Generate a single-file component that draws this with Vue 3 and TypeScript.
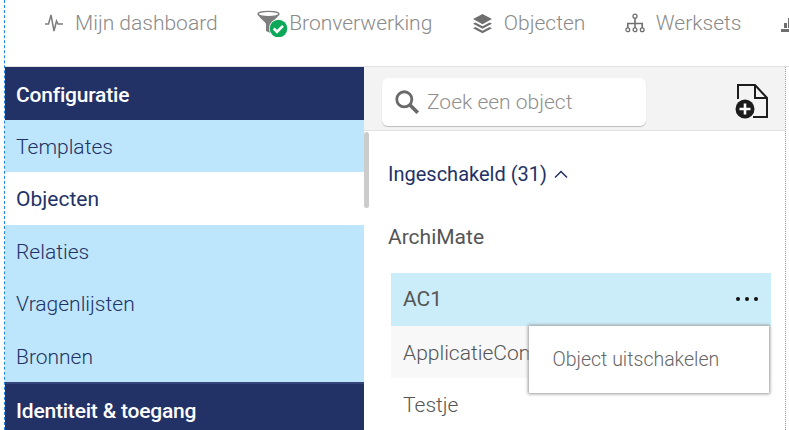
<script setup lang="ts">
const navItems = [
  { label: 'Mijn dashboard', icon: 'pulse' },
  { label: 'Bronverwerking', icon: 'funnel' },
  { label: 'Objecten', icon: 'layers' },
  { label: 'Werksets', icon: 'tree' },
  { label: '', icon: 'chart' },
]
const sideItems = [
  { label: 'Templates', active: false },
  { label: 'Objecten', active: true },
  { label: 'Relaties', active: false },
  { label: 'Vragenlijsten', active: false },
  { label: 'Bronnen', active: false },
]
</script>

<template>
  <div class="page">
    <div class="app">
      <nav class="topnav">
        <div v-for="n in navItems" :key="n.icon" class="nav-item" :class="'nav-' + n.icon">
          <svg v-if="n.icon === 'pulse'" class="nicon" width="20" height="20" viewBox="0 0 20 20" fill="none" stroke="#7d7d7d" stroke-width="1.5">
            <path d="M1 11 H4.5 L7 2 L10 18 L12.5 8 L14 11 H19" />
          </svg>
          <svg v-else-if="n.icon === 'funnel'" class="nfunnel" width="32" height="28" viewBox="0 0 32 28">
            <ellipse cx="11.5" cy="5" rx="10.5" ry="2.6" fill="#fff" stroke="#7d7d7d" stroke-width="1.4" />
            <path d="M1.5 6 C3 10 8 12 9 15 V22 L13.5 24 V15 C14.5 12 20 10 21.5 6 C18 8.5 5 8.5 1.5 6Z" fill="#7d7d7d" />
            <circle cx="21.5" cy="19.5" r="9.5" fill="#fff" />
            <circle cx="21.5" cy="19.5" r="8.8" fill="#0aa858" />
            <path d="M16.7 19.5 L20 22.8 L26 16.9" fill="none" stroke="#fff" stroke-width="2.6" />
          </svg>
          <svg v-else-if="n.icon === 'layers'" class="nicon" width="21" height="21" viewBox="0 0 20 20" fill="#6f6f6f">
            <path d="M10 1 L19 5.8 L10 10.6 L1 5.8Z" />
            <path d="M3.2 9 L10 12.6 L16.8 9 L19 10.2 L10 15 L1 10.2Z" />
            <path d="M3.2 13.4 L10 17 L16.8 13.4 L19 14.6 L10 19.2 L1 14.6Z" />
          </svg>
          <svg v-else-if="n.icon === 'tree'" class="nicon" width="20" height="20" viewBox="0 0 20 20" fill="none" stroke="#6f6f6f" stroke-width="1.3">
            <circle cx="10" cy="3.2" r="2" />
            <circle cx="2.8" cy="16.8" r="1.9" />
            <circle cx="10" cy="16.8" r="1.9" />
            <circle cx="17.2" cy="16.8" r="1.9" />
            <path d="M10 5.2 V15 M2.8 15 V10.5 H17.2 V15" stroke-width="1.6" />
          </svg>
          <svg v-else class="nicon" width="20" height="20" viewBox="0 0 20 20" fill="#6f6f6f">
            <path d="M0 16 H20 V19 H0Z M3 10 H6 V15 H3Z M7 5 H10 V15 H7Z" />
          </svg>
          <span v-if="n.label">{{ n.label }}</span>
        </div>
      </nav>

      <div class="body">
        <aside class="side">
          <div class="side-head">Configuratie</div>
          <div v-for="s in sideItems" :key="s.label" class="side-item" :class="{ active: s.active }">{{ s.label }}</div>
          <div class="side-head second">Identiteit &amp; toegang</div>
        </aside>

        <main class="main">
          <div class="scrollbar"></div>
          <div class="toolbar">
            <div class="search">
              <svg width="28" height="28" viewBox="0 0 26 26" fill="none" stroke="#6a6a6a">
                <circle cx="10.5" cy="10.5" r="7" stroke-width="2.6" />
                <path d="M15.8 15.8 L23 23" stroke-width="3.4" />
              </svg>
              <span>Zoek een object</span>
            </div>
            <svg class="newfile" width="36" height="36" viewBox="0 0 36 36" fill="none">
              <path d="M4 16 V2 H21 L33 15 V34 H19" stroke="#1c1c1c" stroke-width="2" />
              <path d="M21 2 V15 H33" stroke="#1c1c1c" stroke-width="2" />
              <circle cx="11" cy="26" r="9.5" fill="#1c1c1c" />
              <path d="M5.5 26 H16.5 M11 20.5 V31.5" stroke="#fff" stroke-width="2.6" />
            </svg>
          </div>

          <div class="content">
            <div class="toggle">
              <span>Ingeschakeld (31)</span>
              <svg width="14" height="9" viewBox="0 0 14 9" fill="none" stroke="#22315f" stroke-width="1.5">
                <path d="M1 7.5 L7 1.5 L13 7.5" />
              </svg>
            </div>
            <div class="group">ArchiMate</div>
            <ul class="objects">
              <li class="obj selected">
                <span>AC1</span>
                <span class="dots"><i></i><i></i><i></i></span>
                <div class="menu">Object uitschakelen</div>
              </li>
              <li class="obj alt">ApplicatieComponent</li>
              <li class="obj">Testje</li>
            </ul>
          </div>
        </main>
      </div>
    </div>
  </div>
</template>

<style scoped>
.page {
  width: 789px;
  height: 430px;
  overflow: hidden;
  display: flex;
  background: #fff;
  font-family: Roboto, "Liberation Sans", sans-serif;
}
.app {
  margin-left: 4px;
  border-left: 1px dashed #1e88e5;
  flex: 1;
  min-width: 0;
  display: flex;
  flex-direction: column;
}
.topnav {
  height: 67px;
  flex: none;
  display: flex;
  align-items: flex-start;
  padding: 9px 0 0 39px;
  box-sizing: border-box;
  white-space: nowrap;
  overflow: hidden;
  border-bottom: 1px solid #e2e2e2;
  color: #8a8a8a;
  font-size: 21px;
  font-weight: 300;
}
.nav-item {
  display: flex;
  align-items: center;
  height: 28px;
  gap: 11px;
  margin-right: 39.5px;
  flex: none;
}
.nav-funnel {
  gap: 0;
}
.body {
  flex: 1;
  display: flex;
  min-height: 0;
}
.side {
  width: 359px;
  flex: none;
  background: #bde6fc;
}
.side-head {
  height: 52.9px;
  line-height: 57px;
  background: #233266;
  color: #fff;
  font-size: 21px;
  font-weight: 500;
  padding-left: 11px;
  letter-spacing: -0.2px;
}
.side-head.second {
  height: 50px;
  line-height: 55px;
  border-top: 2px solid #34467a;
  box-sizing: border-box;
}
.side-item {
  height: 52.5px;
  line-height: 54px;
  padding-left: 11px;
  font-size: 21px;
  font-weight: 300;
  color: #233266;
}
.side-item.active {
  background: #fff;
  font-weight: 400;
}
.main {
  position: relative;
  flex: 1;
  min-width: 0;
  display: flex;
  flex-direction: column;
  margin-right: 3px;
  border-right: 1px dotted #9a9a9a;
  border-left: 5px solid #fff;
}
.scrollbar {
  position: absolute;
  left: -5px;
  top: 65px;
  width: 5px;
  height: 76px;
  background: #cccccc;
  border-radius: 3px;
}
.toolbar {
  height: 64px;
  flex: none;
  display: flex;
  align-items: center;
  justify-content: space-between;
  padding: 0 15px 0 18px;
  margin-left: -5px;
  background: #f3f3f3;
  border-bottom: 1px solid #e2e2e2;
  box-sizing: border-box;
}
.search {
  width: 264px;
  height: 48px;
  margin-top: 6px;
  box-sizing: border-box;
  background: #fff;
  border-radius: 6px;
  box-shadow: 0 1px 1px #bdbdbd;
  display: flex;
  align-items: center;
  gap: 6px;
  padding-left: 11px;
  font-size: 21px;
  font-weight: 300;
  color: #8f8f8f;
}
.newfile {
  margin-top: 5px;
}
.content {
  padding-left: 19px;
  padding-right: 14px;
}
.toggle {
  display: flex;
  align-items: center;
  gap: 7px;
  margin-top: 28px;
  height: 30px;
  color: #233266;
  font-size: 20px;
}
.group {
  margin-top: 33px;
  height: 30px;
  line-height: 30px;
  color: #555;
  font-size: 21px;
}
.objects {
  list-style: none;
  margin: 21px 0 0 3px;
  padding: 0;
}
.obj {
  position: relative;
  box-sizing: border-box;
  height: 52.5px;
  padding: 2px 12px 0;
  font-size: 21px;
  font-weight: 300;
  color: #555;
  display: flex;
  justify-content: space-between;
  align-items: center;
  white-space: nowrap;
}
.selected {
  padding-top: 0;
  background: #cbecf9;
  font-weight: 400;
}
.alt {
  background: #f8f8f8;
}
.dots {
  display: flex;
  gap: 5px;
  margin-right: 1px;
}
.dots i {
  width: 4px;
  height: 4px;
  background: #111;
  border-radius: 50%;
}
.menu {
  position: absolute;
  top: 53px;
  left: 137.5px;
  width: 240.5px;
  height: 67px;
  box-sizing: border-box;
  background: #fff;
  box-shadow: 0 0 3px 1px #9a9a9a;
  padding-left: 24px;
  font-size: 19.5px;
  line-height: 67px;
  font-weight: 300;
  color: #666;
  z-index: 2;
}
</style>

<style>
html, body { margin: 0; background: #fff; }
</style>
